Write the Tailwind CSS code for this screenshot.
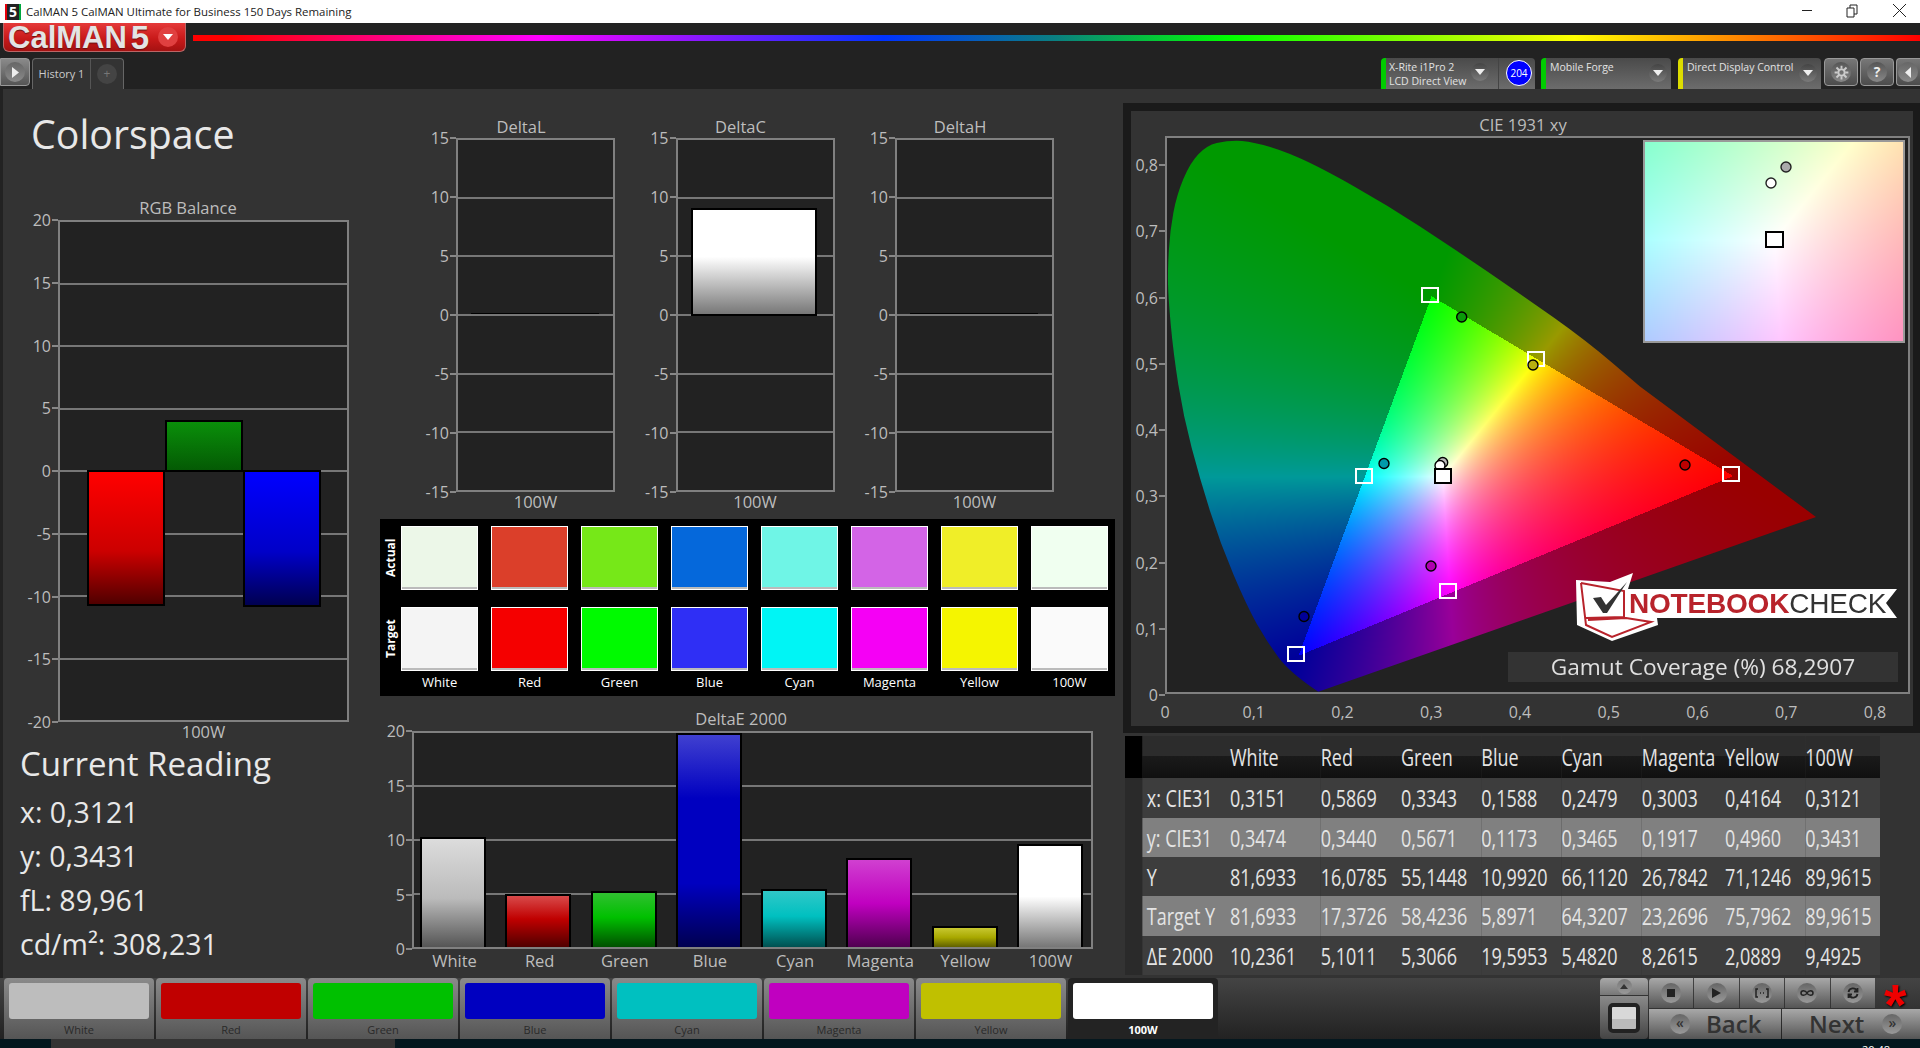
<!DOCTYPE html>
<html>
<head>
<meta charset="utf-8">
<title>CalMAN 5</title>
<script src="https://cdn.jsdelivr.net/npm/@tailwindcss/browser@4"></script>
</head>
<body class="w-[1920px] h-[1048px] overflow-hidden bg-[#333] text-[#bdbdbd] [font-family:'Open_Sans',sans-serif]">

<!-- Title bar -->
<div class="h-[23px] bg-white flex items-center text-[#222]">
  <div class="ml-[5px] w-[16px] h-[16px] bg-[#222] text-white text-[14px] font-bold leading-[16px] text-center border-l-2 border-red-600 border-r-2 border-r-green-600">5</div>
  <span class="ml-[5px] text-[11.45px] leading-none">CalMAN 5 CalMAN Ultimate for Business 150 Days Remaining</span>
  <div class="ml-auto flex items-center">
    <svg class="w-[137px] h-[23px]" viewBox="0 0 137 23" fill="none" stroke="#222"><path d="M19 10.500h10M64 8h7v9h-7zM67 8V5h7v9h-3M110 4l13 13M123 4l-13 13"/></svg>
  </div>
</div>

<!-- Header: logo, rainbow, tabs -->
<div class="h-[66px] bg-[#222] relative">
  <div class="flex items-start">
    <div class="ml-[3px] w-[183px] h-[29px] rounded-b-md border border-t-0 border-[#b66] bg-[linear-gradient(#e53a3a,#c91a1a_55%,#a51212)] flex items-center pl-[4px] [font-family:'Liberation_Sans',sans-serif] font-bold text-[#e4e4e4] [text-shadow:0_1px_1px_#611]">
      <span class="text-[31px] leading-none">CalMAN</span>
      <span class="ml-[4px] text-[33px] leading-none">5</span>
      <span class="ml-auto mr-[7px] w-[20px] h-[20px] rounded-full bg-[#e04040] flex items-center justify-center">
        <svg class="w-[10px] h-[6px]" viewBox="0 0 10 6"><path d="M0 0h10L5 6z" fill="#fff"/></svg>
      </span>
    </div>
    <div class="ml-[7px] mt-[12px] h-[6px] flex-1 bg-[linear-gradient(90deg,#ff0000_2%,#ff00ff_20%,#0033ff_40%,#0a8080_50%,#00ff00_60%,#ffff00_80%,#ff0000_100%)]"></div>
  </div>

  <!-- Left tabs -->
  <div class="absolute left-0 top-[35px] flex items-start">
    <div class="w-[30px] h-[28px] rounded-r-[4px] border border-[#999] bg-[linear-gradient(#8a8a8a,#555)] flex items-center justify-center">
      <span class="w-[20px] h-[20px] rounded-full bg-[linear-gradient(#666,#8a8a8a)] flex items-center justify-center">
        <svg class="w-[7px] h-[11px]" viewBox="0 0 7 11"><path d="M0 0l7 5.500L0 11z" fill="#eee"/></svg>
      </span>
    </div>
    <div class="ml-[2px] h-[31px] rounded-t-[4px] border border-b-0 border-[#666] bg-[#333] flex items-center">
      <span class="w-[58px] text-center text-[11px] text-[#ccc] border-r border-[#555] leading-[30px]">History 1</span>
      <span class="mx-[6px] w-[20px] h-[20px] rounded-full bg-[#444] text-[#777] text-[12px] leading-[20px] text-center">+</span>
    </div>
  </div>

  <!-- Right tabs -->
  <div class="absolute right-0 top-[35px] flex items-start">
    <div class="w-[154px] h-[31px] rounded-t-[4px] bg-[linear-gradient(#4a4a4a,#6c6c6c)] flex border-l-[5px] border-[#0c0] mr-[6px]">
      <div class="pl-[3px] pt-[2px] text-[10.5px] leading-[14px] text-[#e2e2e2] whitespace-nowrap w-[85px]">X-Rite i1Pro 2<br>LCD Direct View</div>
      <span class="mt-[5px] w-[18px] h-[18px] rounded-full bg-[linear-gradient(#444,#7a7a7a)] flex items-center justify-center"><svg class="w-[10px] h-[6px]" viewBox="0 0 10 6"><path d="M0 0h10L5 6z" fill="#eee"/></svg></span>
      <span class="ml-[9px] border-l border-[#444] pl-[7px] pt-[2px]">
        <span class="block w-[26px] h-[26px] rounded-full bg-[#00f] border border-white text-white text-[10px] leading-[24px] text-center">204</span>
      </span>
    </div>
    <div class="w-[130px] h-[31px] rounded-t-[4px] bg-[linear-gradient(#4a4a4a,#6c6c6c)] flex border-l-[5px] border-[#0c0] mr-[7px]">
      <div class="pl-[4px] pt-[2px] text-[10.5px] leading-[14px] text-[#e2e2e2] whitespace-nowrap w-[103px]">Mobile Forge</div>
      <span class="mt-[6px] w-[18px] h-[18px] rounded-full bg-[linear-gradient(#444,#7a7a7a)] flex items-center justify-center"><svg class="w-[10px] h-[6px]" viewBox="0 0 10 6"><path d="M0 0h10L5 6z" fill="#eee"/></svg></span>
    </div>
    <div class="w-[143px] h-[31px] rounded-t-[4px] bg-[linear-gradient(#4a4a4a,#6c6c6c)] flex border-l-[5px] border-[#dd0] mr-[3px]">
      <div class="pl-[4px] pt-[2px] text-[10.5px] leading-[14px] text-[#e2e2e2] whitespace-nowrap w-[116px]">Direct Display Control</div>
      <span class="mt-[6px] w-[18px] h-[18px] rounded-full bg-[linear-gradient(#444,#7a7a7a)] flex items-center justify-center"><svg class="w-[10px] h-[6px]" viewBox="0 0 10 6"><path d="M0 0h10L5 6z" fill="#eee"/></svg></span>
    </div>
    <div class="w-[34px] h-[28px] mr-[2px] rounded-[4px] border border-[#999] bg-[linear-gradient(#777,#4c4c4c)] flex items-center justify-center">
      <span class="w-[20px] h-[20px] rounded-full bg-[linear-gradient(#555,#888)] flex items-center justify-center">
        <svg class="w-[15px] h-[15px]" viewBox="0 0 24 24" fill="none" stroke="#ccc" stroke-width="3"><circle cx="12" cy="12" r="5"/><path d="M12 1v5M12 18v5M1 12h5M18 12h5M4 4l4 4M16 16l4 4M20 4l-4 4M8 16l-4 4"/></svg>
      </span>
    </div>
    <div class="w-[34px] h-[28px] mr-[2px] rounded-[4px] border border-[#999] bg-[linear-gradient(#777,#4c4c4c)] flex items-center justify-center">
      <span class="w-[20px] h-[20px] rounded-full bg-[linear-gradient(#555,#888)] text-[#eee] text-[14px] font-bold leading-[20px] text-center">?</span>
    </div>
    <div class="w-[24px] h-[28px] rounded-l-[4px] border border-r-0 border-[#999] bg-[linear-gradient(#777,#4c4c4c)] flex items-center pl-[1px]">
      <span class="w-[20px] h-[20px] rounded-full bg-[linear-gradient(#666,#8a8a8a)] flex items-center justify-center">
        <svg class="w-[6px] h-[11px]" viewBox="0 0 6 11"><path d="M6 0v11L0 5.500z" fill="#eee"/></svg>
      </span>
    </div>
  </div>
</div>

<!-- Main -->
<div class="h-[889px] flex">

  <!-- Left column -->
  <div class="w-[370px] border-l-[3px] border-[#222]">
    <h1 class="h-[107px] pl-[28px] pt-[17px] text-[39.3px] leading-[56px] text-[#e8e8e8]">Colorspace</h1>
    <div class="ml-[55px] w-[260px] text-center text-[16.5px] leading-[24px] text-[#bdbdbd]">RGB Balance</div>
    <div class="flex">
      <div class="w-[55px] h-[502px] flex flex-col justify-between text-[16px] text-[#bdbdbd]">
        <div class="h-0 flex items-center justify-end gap-px">20<i class="w-[6px] h-[2px] bg-[#888]"></i></div>
        <div class="h-0 flex items-center justify-end gap-px">15<i class="w-[6px] h-[2px] bg-[#888]"></i></div>
        <div class="h-0 flex items-center justify-end gap-px">10<i class="w-[6px] h-[2px] bg-[#888]"></i></div>
        <div class="h-0 flex items-center justify-end gap-px">5<i class="w-[6px] h-[2px] bg-[#888]"></i></div>
        <div class="h-0 flex items-center justify-end gap-px">0<i class="w-[6px] h-[2px] bg-[#888]"></i></div>
        <div class="h-0 flex items-center justify-end gap-px">-5<i class="w-[6px] h-[2px] bg-[#888]"></i></div>
        <div class="h-0 flex items-center justify-end gap-px">-10<i class="w-[6px] h-[2px] bg-[#888]"></i></div>
        <div class="h-0 flex items-center justify-end gap-px">-15<i class="w-[6px] h-[2px] bg-[#888]"></i></div>
        <div class="h-0 flex items-center justify-end gap-px">-20<i class="w-[6px] h-[2px] bg-[#888]"></i></div>
      </div>
      <div class="relative w-[291px] h-[502px] bg-[#222] border-2 border-[#808080] flex flex-col">
        <div class="flex-1"></div><div class="flex-1 border-t-2 border-[#777]"></div><div class="flex-1 border-t-2 border-[#777]"></div><div class="flex-1 border-t-2 border-[#777]"></div><div class="flex-1 border-t-2 border-[#777]"></div><div class="flex-1 border-t-2 border-[#777]"></div><div class="flex-1 border-t-2 border-[#777]"></div><div class="flex-1 border-t-2 border-[#777]"></div>
        <div class="absolute left-[27px] top-[248px] w-[78px] h-[136px] border-2 border-black bg-[linear-gradient(#ff0000,#cc0000_60%,#500000)]"></div>
        <div class="absolute left-[105px] top-[198px] w-[78px] h-[52px] border-2 border-black bg-[linear-gradient(#0a8f0a,#045a04)]"></div>
        <div class="absolute left-[183px] top-[248px] w-[78px] h-[137px] border-2 border-black bg-[linear-gradient(#0000ff,#0000c8_60%,#000050)]"></div>
      </div>
    </div>
    <div class="ml-[55px] w-[291px] text-center text-[16.5px] leading-[20px]">100W</div>
    <div class="pl-[17px] text-[#e8e8e8]">
      <div class="text-[33px] leading-[44px]">Current Reading</div>
      <div class="text-[28.5px] leading-[44px] mt-[4px]">x: 0,3121</div>
      <div class="text-[28.5px] leading-[44px]">y: 0,3431</div>
      <div class="text-[28.5px] leading-[44px]">fL: 89,961</div>
      <div class="text-[28.5px] leading-[44px]">cd/m²: 308,231</div>
    </div>
  </div>

  <!-- Middle column -->
  <div class="w-[753px]">
    <div class="flex pl-[40px] pt-[27px] gap-[14.5px] h-[430px]">
      <!-- DeltaL -->
      <div class="w-[205px]">
        <div class="ml-[46px] w-[130px] text-center text-[16.5px] leading-[22px]">DeltaL</div>
        <div class="flex">
          <div class="w-[46px] h-[354px] flex flex-col justify-between text-[16px]">
            <div class="h-0 flex items-center justify-end gap-px">15<i class="w-[6px] h-[2px] bg-[#888]"></i></div>
            <div class="h-0 flex items-center justify-end gap-px">10<i class="w-[6px] h-[2px] bg-[#888]"></i></div>
            <div class="h-0 flex items-center justify-end gap-px">5<i class="w-[6px] h-[2px] bg-[#888]"></i></div>
            <div class="h-0 flex items-center justify-end gap-px">0<i class="w-[6px] h-[2px] bg-[#888]"></i></div>
            <div class="h-0 flex items-center justify-end gap-px">-5<i class="w-[6px] h-[2px] bg-[#888]"></i></div>
            <div class="h-0 flex items-center justify-end gap-px">-10<i class="w-[6px] h-[2px] bg-[#888]"></i></div>
            <div class="h-0 flex items-center justify-end gap-px">-15<i class="w-[6px] h-[2px] bg-[#888]"></i></div>
          </div>
          <div class="relative w-[159px] h-[354px] bg-[#222] border-2 border-[#808080] flex flex-col">
            <div class="flex-1"></div><div class="flex-1 border-t-2 border-[#777]"></div><div class="flex-1 border-t-2 border-[#777]"></div><div class="flex-1 border-t-2 border-[#777]"></div><div class="flex-1 border-t-2 border-[#777]"></div><div class="flex-1 border-t-2 border-[#777]"></div>
            <div class="absolute left-[13px] top-[173px] w-[128px] h-px bg-black"></div>
          </div>
        </div>
        <div class="ml-[46px] text-center text-[16.5px] leading-[20px]">100W</div>
      </div>
      <!-- DeltaC -->
      <div class="w-[205px]">
        <div class="ml-[46px] w-[130px] text-center text-[16.5px] leading-[22px]">DeltaC</div>
        <div class="flex">
          <div class="w-[46px] h-[354px] flex flex-col justify-between text-[16px]">
            <div class="h-0 flex items-center justify-end gap-px">15<i class="w-[6px] h-[2px] bg-[#888]"></i></div>
            <div class="h-0 flex items-center justify-end gap-px">10<i class="w-[6px] h-[2px] bg-[#888]"></i></div>
            <div class="h-0 flex items-center justify-end gap-px">5<i class="w-[6px] h-[2px] bg-[#888]"></i></div>
            <div class="h-0 flex items-center justify-end gap-px">0<i class="w-[6px] h-[2px] bg-[#888]"></i></div>
            <div class="h-0 flex items-center justify-end gap-px">-5<i class="w-[6px] h-[2px] bg-[#888]"></i></div>
            <div class="h-0 flex items-center justify-end gap-px">-10<i class="w-[6px] h-[2px] bg-[#888]"></i></div>
            <div class="h-0 flex items-center justify-end gap-px">-15<i class="w-[6px] h-[2px] bg-[#888]"></i></div>
          </div>
          <div class="relative w-[159px] h-[354px] bg-[#222] border-2 border-[#808080] flex flex-col">
            <div class="flex-1"></div><div class="flex-1 border-t-2 border-[#777]"></div><div class="flex-1 border-t-2 border-[#777]"></div><div class="flex-1 border-t-2 border-[#777]"></div><div class="flex-1 border-t-2 border-[#777]"></div><div class="flex-1 border-t-2 border-[#777]"></div>
            <div class="absolute left-[13px] top-[68px] w-[126px] h-[108px] border-2 border-black bg-[linear-gradient(#fff,#fff_45%,#777)]"></div>
          </div>
        </div>
        <div class="ml-[46px] text-center text-[16.5px] leading-[20px]">100W</div>
      </div>
      <!-- DeltaH -->
      <div class="w-[205px]">
        <div class="ml-[46px] w-[130px] text-center text-[16.5px] leading-[22px]">DeltaH</div>
        <div class="flex">
          <div class="w-[46px] h-[354px] flex flex-col justify-between text-[16px]">
            <div class="h-0 flex items-center justify-end gap-px">15<i class="w-[6px] h-[2px] bg-[#888]"></i></div>
            <div class="h-0 flex items-center justify-end gap-px">10<i class="w-[6px] h-[2px] bg-[#888]"></i></div>
            <div class="h-0 flex items-center justify-end gap-px">5<i class="w-[6px] h-[2px] bg-[#888]"></i></div>
            <div class="h-0 flex items-center justify-end gap-px">0<i class="w-[6px] h-[2px] bg-[#888]"></i></div>
            <div class="h-0 flex items-center justify-end gap-px">-5<i class="w-[6px] h-[2px] bg-[#888]"></i></div>
            <div class="h-0 flex items-center justify-end gap-px">-10<i class="w-[6px] h-[2px] bg-[#888]"></i></div>
            <div class="h-0 flex items-center justify-end gap-px">-15<i class="w-[6px] h-[2px] bg-[#888]"></i></div>
          </div>
          <div class="relative w-[159px] h-[354px] bg-[#222] border-2 border-[#808080] flex flex-col">
            <div class="flex-1"></div><div class="flex-1 border-t-2 border-[#777]"></div><div class="flex-1 border-t-2 border-[#777]"></div><div class="flex-1 border-t-2 border-[#777]"></div><div class="flex-1 border-t-2 border-[#777]"></div><div class="flex-1 border-t-2 border-[#777]"></div>
            <div class="absolute left-[13px] top-[173px] w-[128px] h-px bg-black"></div>
          </div>
        </div>
        <div class="ml-[46px] text-center text-[16.5px] leading-[20px]">100W</div>
      </div>
    </div>

    <!-- Actual / target swatches -->
    <div class="ml-[10px] w-[735px] h-[177px] bg-black flex">
      <div class="w-[21px] pt-[7px] flex flex-col items-center gap-[17px] text-white text-[12px] font-bold">
        <div class="h-[64px] [writing-mode:vertical-rl] rotate-180 text-center leading-[20px]">Actual</div>
        <div class="h-[64px] [writing-mode:vertical-rl] rotate-180 text-center leading-[20px]">Target</div>
      </div>
      <div class="w-[714px] grid grid-cols-8 gap-x-[12.8px] pt-[7px] pr-[7px] grid-rows-[64px_64px_24px] gap-y-[17px] content-start">
        <div class="border border-white shadow-[inset_0_-2px_0_#bbb] bg-[#ecf7e8]"></div>
        <div class="border border-white shadow-[inset_0_-2px_0_#bbb] bg-[#db3f2a]"></div>
        <div class="border border-white shadow-[inset_0_-2px_0_#bbb] bg-[#76e818]"></div>
        <div class="border border-white shadow-[inset_0_-2px_0_#bbb] bg-[#0568db]"></div>
        <div class="border border-white shadow-[inset_0_-2px_0_#bbb] bg-[#6ff5e6]"></div>
        <div class="border border-white shadow-[inset_0_-2px_0_#bbb] bg-[#d364e6]"></div>
        <div class="border border-white shadow-[inset_0_-2px_0_#bbb] bg-[#f0ee28]"></div>
        <div class="border border-white shadow-[inset_0_-2px_0_#bbb] bg-[#f0fff0]"></div>
        <div class="border border-white shadow-[inset_0_-2px_0_#bbb] bg-[#f4f4f4]"></div>
        <div class="border border-white shadow-[inset_0_-2px_0_#bbb] bg-[#f50000]"></div>
        <div class="border border-white shadow-[inset_0_-2px_0_#bbb] bg-[#00fa00]"></div>
        <div class="border border-white shadow-[inset_0_-2px_0_#bbb] bg-[#2f2ff5]"></div>
        <div class="border border-white shadow-[inset_0_-2px_0_#bbb] bg-[#00f5f5]"></div>
        <div class="border border-white shadow-[inset_0_-2px_0_#bbb] bg-[#f500f5]"></div>
        <div class="border border-white shadow-[inset_0_-2px_0_#bbb] bg-[#f5f500]"></div>
        <div class="border border-white shadow-[inset_0_-2px_0_#bbb] bg-[#fafafa]"></div>
        <div class="col-span-8 grid grid-cols-8 gap-x-[12.8px] mt-[-18px] text-white text-[13px] leading-[24px] text-center">
          <span>White</span><span>Red</span><span>Green</span><span>Blue</span><span>Cyan</span><span>Magenta</span><span>Yellow</span><span>100W</span>
        </div>
      </div>
    </div>

    <!-- DeltaE 2000 -->
    <div class="ml-[42px] mt-[11px] mb-px w-[658px] text-center text-[16.5px] leading-[23px]">DeltaE 2000</div>
    <div class="flex">
      <div class="w-[42px] h-[218px] flex flex-col justify-between text-[16px]">
        <div class="h-0 flex items-center justify-end gap-px">20<i class="w-[6px] h-[2px] bg-[#888]"></i></div>
        <div class="h-0 flex items-center justify-end gap-px">15<i class="w-[6px] h-[2px] bg-[#888]"></i></div>
        <div class="h-0 flex items-center justify-end gap-px">10<i class="w-[6px] h-[2px] bg-[#888]"></i></div>
        <div class="h-0 flex items-center justify-end gap-px">5<i class="w-[6px] h-[2px] bg-[#888]"></i></div>
        <div class="h-0 flex items-center justify-end gap-px">0<i class="w-[6px] h-[2px] bg-[#888]"></i></div>
      </div>
      <div class="relative w-[681px] h-[218px] bg-[#222] border-2 border-[#808080] flex flex-col">
        <div class="flex-1"></div><div class="flex-1 border-t-2 border-[#777]"></div><div class="flex-1 border-t-2 border-[#777]"></div><div class="flex-1 border-t-2 border-[#777]"></div>
        <div class="absolute inset-0 flex items-end pl-[6px] gap-[19.3px]">
          <div class="w-[66px] h-[110px] border-2 border-b-0 border-black bg-[linear-gradient(#dcdcdc,#bbb_55%,#555)]"></div>
          <div class="w-[66px] h-[53px] border-2 border-b-0 border-black bg-[linear-gradient(#d84a4a,#c00000_45%,#500000)]"></div>
          <div class="w-[66px] h-[56px] border-2 border-b-0 border-black bg-[linear-gradient(#30c030,#00c000_45%,#005000)]"></div>
          <div class="w-[66px] h-[214px] border-2 border-b-0 border-black bg-[linear-gradient(#4040d0,#0000c0_30%,#0000c0_70%,#000050)]"></div>
          <div class="w-[66px] h-[58px] border-2 border-b-0 border-black bg-[linear-gradient(#30c8c8,#00c0c0_45%,#005050)]"></div>
          <div class="w-[66px] h-[89px] border-2 border-b-0 border-black bg-[linear-gradient(#d040d0,#c000c0_50%,#500050)]"></div>
          <div class="w-[66px] h-[21px] border-2 border-b-0 border-black bg-[linear-gradient(#c8c830,#a8a800_50%,#606000)]"></div>
          <div class="w-[66px] h-[103px] border-2 border-b-0 border-black bg-[linear-gradient(#fff,#fff_50%,#777)]"></div>
        </div>
      </div>
    </div>
    <div class="ml-[42px] w-[681px] grid grid-cols-8 text-center text-[16.5px] leading-[24px]">
      <span>White</span><span>Red</span><span>Green</span><span>Blue</span><span>Cyan</span><span>Magenta</span><span>Yellow</span><span>100W</span>
    </div>
  </div>

  <!-- Right column -->
  <div class="w-[797px] pt-[14px]">
    <div class="h-[630px] bg-[#1a1a1a] pl-[8px] pr-[7px] pt-[8px] pb-[7px]">
      <div class="h-[615px] bg-[#333] relative">
        <div class="h-[25px] ml-[34px] w-[716px] text-center text-[16.5px] leading-[28px]">CIE 1931 xy</div>

        <div class="flex">
          <div class="w-[34px] pt-[29px] h-[558px]">
            <div class="h-[530px] flex flex-col justify-between text-[16px]">
              <div class="h-0 flex items-center justify-end gap-px">0,8<i class="w-[6px] h-[2px] bg-[#888]"></i></div>
              <div class="h-0 flex items-center justify-end gap-px">0,7<i class="w-[6px] h-[2px] bg-[#888]"></i></div>
              <div class="h-0 flex items-center justify-end gap-px">0,6<i class="w-[6px] h-[2px] bg-[#888]"></i></div>
              <div class="h-0 flex items-center justify-end gap-px">0,5<i class="w-[6px] h-[2px] bg-[#888]"></i></div>
              <div class="h-0 flex items-center justify-end gap-px">0,4<i class="w-[6px] h-[2px] bg-[#888]"></i></div>
              <div class="h-0 flex items-center justify-end gap-px">0,3<i class="w-[6px] h-[2px] bg-[#888]"></i></div>
              <div class="h-0 flex items-center justify-end gap-px">0,2<i class="w-[6px] h-[2px] bg-[#888]"></i></div>
              <div class="h-0 flex items-center justify-end gap-px">0,1<i class="w-[6px] h-[2px] bg-[#888]"></i></div>
              <div class="h-0 flex items-center justify-end gap-px">0<i class="w-[6px] h-[2px] bg-[#888]"></i></div>
            </div>
          </div>

          <!-- Chromaticity plot -->
          <div class="relative w-[745px] h-[558px] bg-[#222] border-2 border-[#808080]">
            <canvas id="cie" width="745" height="558" class="absolute left-[-2px] top-[-2px]"></canvas>

            <!-- Markers, coordinates are relative to the plot -->
            <svg class="absolute left-[-2px] top-[-2px]" width="745" height="558" fill="none" stroke-width="2">
              <g stroke="#fff">
                <rect x="257" y="152" width="16" height="14"/>
                <rect x="363" y="216" width="16" height="14"/>
                <rect x="191" y="333" width="16" height="14"/>
                <rect x="275" y="448" width="16" height="14"/>
                <rect x="123" y="511" width="16" height="14"/>
                <rect x="558" y="331" width="16" height="14"/>
              </g>
              <g stroke="#000" stroke-width="1.4">
                <ellipse cx="296.7" cy="181" rx="5" ry="5" fill="#0a9a0a"/>
                <ellipse cx="368" cy="229" rx="5" ry="5" fill="#b8b010"/>
                <ellipse cx="219" cy="327.5" rx="5" ry="5" fill="#009aaa"/>
                <ellipse cx="139" cy="480.5" rx="5" ry="5" fill="#000099"/>
                <ellipse cx="266" cy="430" rx="5" ry="5" fill="#b000b0"/>
                <ellipse cx="520" cy="329" rx="5" ry="5" fill="#bb0000"/>
                <ellipse cx="277.7" cy="326.5" rx="5" ry="5" fill="#bbb"/>
                <ellipse cx="275" cy="329.5" rx="5" ry="5" fill="#fff"/>
              </g>
              <rect x="270" y="333" width="16" height="14" fill="#fff" stroke="#000"/>
            </svg>

            <!-- Zoomed white point inset -->
            <div class="absolute right-0 top-0 w-[268px] h-[207px] bg-[#222] pl-[3px] pt-[2px]">
              <div class="relative w-[262px] h-[203px] border-2 border-[#999]">
                <canvas id="cie-zoom" width="258" height="199" class="block"></canvas>
                <svg class="absolute left-0 top-0" width="258" height="199" fill="none">
                  <circle cx="141" cy="25" r="5" fill="#aaa" stroke="#222" stroke-width="1.4"/>
                  <circle cx="126" cy="41" r="5" fill="#fff" stroke="#222" stroke-width="1.4"/>
                  <rect x="121" y="90" width="17" height="15" fill="#fff" stroke="#000" stroke-width="2"/>
                </svg>
              </div>
            </div>

            <!-- Gamut coverage -->
            <div class="absolute left-[341px] top-[514px] w-[390px] h-[30px] bg-[#333] text-center text-[#e0e0e0] text-[22.7px] leading-[30px]">Gamut Coverage (%) 68,2907</div>

            <!-- Notebookcheck logo -->
            <div class="absolute left-[403px] top-[427px] w-[327px] h-[80px]">
              <svg class="absolute inset-0" width="327" height="80" viewBox="0 0 327 80">
                <path d="M6 15L40 17 63 8 58 24H327L316 38 327 53H87L88 60 42 76 7 60z" fill="#fff"/>
                <path d="M11 18L54 26 54 52 16 53M11 18L16 60 42 72 81 57 56 53 18 55" fill="none" stroke="#b8232b" stroke-width="2"/>
                <path d="M23 33L31 32 36 40 57 17 37 48 33 48z" fill="#333"/>
              </svg>
              <div class="absolute left-[59px] top-[22px] flex text-[28px] leading-[33px] tracking-[-0.2px] [font-family:'Liberation_Sans',sans-serif] whitespace-nowrap">
                <span class="font-bold text-[#b8232b]">NOTEBOOK</span><span class="text-[#333]">CHECK</span>
              </div>
            </div>
          </div>
        </div>

        <div class="ml-[34px] w-[710px] flex justify-between text-[16px] pt-[6px] leading-[24px]">
          <span class="w-0 flex justify-center">0</span><span class="w-0 flex justify-center">0,1</span><span class="w-0 flex justify-center">0,2</span><span class="w-0 flex justify-center">0,3</span><span class="w-0 flex justify-center">0,4</span><span class="w-0 flex justify-center">0,5</span><span class="w-0 flex justify-center">0,6</span><span class="w-0 flex justify-center">0,7</span><span class="w-0 flex justify-center">0,8</span>
        </div>
      </div>
    </div>

    <!-- Results table, set in a condensed look like the original -->
    <div class="ml-[2px] mt-[3px] w-[755px] h-[239px] overflow-hidden">
      <table class="w-[1007px] table-fixed origin-top-left scale-x-[.75] text-[24px] text-[#e4e4e4] border-collapse">
        <colgroup>
          <col class="w-[23px]"><col class="w-[117px]"><col class="w-[121px]"><col class="w-[107px]"><col class="w-[107px]"><col class="w-[107px]"><col class="w-[107px]"><col class="w-[111px]"><col class="w-[107px]"><col class="w-[100px]">
        </colgroup>
        <tr class="h-[42px] bg-[linear-gradient(#2c2c2c,#2c2c2c_48%,#1a1a1a_48%,#101010)]">
          <td class="bg-black"></td><td></td><td>White</td><td>Red</td><td>Green</td><td>Blue</td><td>Cyan</td><td>Magenta</td><td>Yellow</td><td>100W</td>
        </tr>
        <tr class="h-[40px] bg-[#3d3d3d]">
          <td class="bg-[#2a2a2a]"></td><td class="pl-[6px] whitespace-nowrap">x: CIE31</td><td>0,3151</td><td>0,5869</td><td>0,3343</td><td>0,1588</td><td>0,2479</td><td>0,3003</td><td>0,4164</td><td>0,3121</td>
        </tr>
        <tr class="h-[39px] bg-[#808080]">
          <td class="bg-[#2a2a2a]"></td><td class="pl-[6px] whitespace-nowrap">y: CIE31</td><td>0,3474</td><td>0,3440</td><td>0,5671</td><td>0,1173</td><td>0,3465</td><td>0,1917</td><td>0,4960</td><td>0,3431</td>
        </tr>
        <tr class="h-[39px] bg-[#3d3d3d]">
          <td class="bg-[#2a2a2a]"></td><td class="pl-[6px] whitespace-nowrap">Y</td><td>81,6933</td><td>16,0785</td><td>55,1448</td><td>10,9920</td><td>66,1120</td><td>26,7842</td><td>71,1246</td><td>89,9615</td>
        </tr>
        <tr class="h-[40px] bg-[#808080]">
          <td class="bg-[#2a2a2a]"></td><td class="pl-[6px] whitespace-nowrap">Target Y</td><td>81,6933</td><td>17,3726</td><td>58,4236</td><td>5,8971</td><td>64,3207</td><td>23,2696</td><td>75,7962</td><td>89,9615</td>
        </tr>
        <tr class="h-[39px] bg-[#3d3d3d]">
          <td class="bg-[#2a2a2a]"></td><td class="pl-[6px] whitespace-nowrap">ΔE 2000</td><td>10,2361</td><td>5,1011</td><td>5,3066</td><td>19,5953</td><td>5,4820</td><td>8,2615</td><td>2,0889</td><td>9,4925</td>
        </tr>
      </table>
    </div>
  </div>
</div>

<!-- Bottom bar -->
<div class="h-[61px] flex bg-[linear-gradient(#444,#222)]">
  <div class="pl-[4px] flex gap-[2px] text-[11px] text-[#2a2a2a] text-center">
    <div class="w-[150px] rounded-t-[4px] bg-[linear-gradient(#8a8a8a,#555)] p-[5px] pb-0"><div class="h-[36px] rounded-[3px] bg-[#bdbdbd]"></div><div class="leading-[22px]">White</div></div>
    <div class="w-[150px] rounded-t-[4px] bg-[linear-gradient(#8a8a8a,#555)] p-[5px] pb-0"><div class="h-[36px] rounded-[3px] bg-[#c00000]"></div><div class="leading-[22px]">Red</div></div>
    <div class="w-[150px] rounded-t-[4px] bg-[linear-gradient(#8a8a8a,#555)] p-[5px] pb-0"><div class="h-[36px] rounded-[3px] bg-[#00c000]"></div><div class="leading-[22px]">Green</div></div>
    <div class="w-[150px] rounded-t-[4px] bg-[linear-gradient(#8a8a8a,#555)] p-[5px] pb-0"><div class="h-[36px] rounded-[3px] bg-[#0000c0]"></div><div class="leading-[22px]">Blue</div></div>
    <div class="w-[150px] rounded-t-[4px] bg-[linear-gradient(#8a8a8a,#555)] p-[5px] pb-0"><div class="h-[36px] rounded-[3px] bg-[#00c0c0]"></div><div class="leading-[22px]">Cyan</div></div>
    <div class="w-[150px] rounded-t-[4px] bg-[linear-gradient(#8a8a8a,#555)] p-[5px] pb-0"><div class="h-[36px] rounded-[3px] bg-[#c000c0]"></div><div class="leading-[22px]">Magenta</div></div>
    <div class="w-[150px] rounded-t-[4px] bg-[linear-gradient(#8a8a8a,#555)] p-[5px] pb-0"><div class="h-[36px] rounded-[3px] bg-[#c0c000]"></div><div class="leading-[22px]">Yellow</div></div>
    <div class="w-[150px] rounded-t-[4px] bg-[#232323] p-[5px] pb-0"><div class="h-[36px] rounded-[3px] bg-white"></div><div class="leading-[22px] font-bold text-white">100W</div></div>
  </div>

  <!-- Measure controls -->
  <div class="ml-[382px] w-[48px] mr-px rounded-[4px] overflow-hidden flex flex-col">
    <div class="h-[18px] bg-[linear-gradient(#a8a8a8,#777)] flex justify-center items-center border-b border-[#333]">
      <span class="w-[15px] h-[15px] rounded-full bg-[linear-gradient(#777,#999)] flex items-center justify-center"><svg class="w-[8px] h-[5px]" viewBox="0 0 8 5"><path d="M4 0l4 5H0z" fill="#333"/></svg></span>
    </div>
    <div class="flex-1 bg-[linear-gradient(#8a8a8a,#444)] flex items-center justify-center">
      <span class="w-[32px] h-[30px] rounded-[5px] border-[4px] border-[#222] bg-[linear-gradient(#d8d8d8,#d8d8d8_55%,#bbb_55%,#bbb)]"></span>
    </div>
  </div>
  <div class="flex-1 flex flex-col relative">
    <div class="h-[30px] w-[226px] flex gap-px rounded-tl-[4px] overflow-hidden">
      <div class="flex-1 bg-[linear-gradient(#a8a8a8,#555)] flex items-center justify-center"><span class="w-[20px] h-[20px] rounded-full bg-[linear-gradient(#666,#999)] flex items-center justify-center"><svg class="w-[8px] h-[8px]" viewBox="0 0 8 8"><path d="M0 0h8v8H0z" fill="#222"/></svg></span></div>
      <div class="flex-1 bg-[linear-gradient(#a8a8a8,#555)] flex items-center justify-center"><span class="w-[20px] h-[20px] rounded-full bg-[linear-gradient(#666,#999)] flex items-center justify-center"><svg class="w-[9px] h-[10px]" viewBox="0 0 9 10"><path d="M0 0l9 5-9 5z" fill="#222"/></svg></span></div>
      <div class="flex-1 bg-[linear-gradient(#a8a8a8,#555)] flex items-center justify-center"><span class="w-[20px] h-[20px] rounded-full bg-[linear-gradient(#666,#999)] flex items-center justify-center"><svg class="w-[14px] h-[10px]" viewBox="0 0 14 10" fill="none" stroke="#222" stroke-width="1.5"><path d="M3 1H1v8h2M11 1h2v8h-2M5 5h1M8 5h1"/></svg></span></div>
      <div class="flex-1 bg-[linear-gradient(#a8a8a8,#555)] flex items-center justify-center"><span class="w-[20px] h-[20px] rounded-full bg-[linear-gradient(#666,#999)] flex items-center justify-center"><svg class="w-[14px] h-[8px]" viewBox="0 0 14 8" fill="none" stroke="#222" stroke-width="1.5"><path d="M7 4C5.500 1 1 1 1 4s4.500 3 6 0 6-3 6 0-4.500 3-6 0z"/></svg></span></div>
      <div class="flex-1 bg-[linear-gradient(#a8a8a8,#555)] flex items-center justify-center"><span class="w-[20px] h-[20px] rounded-full bg-[linear-gradient(#666,#999)] flex items-center justify-center"><svg class="w-[12px] h-[12px]" viewBox="0 0 12 12" fill="none" stroke="#222" stroke-width="1.8"><path d="M1.500 5A4.500 4.500 0 0 1 10 4M10.500 7A4.500 4.500 0 0 1 2 8M10.500 1v3.500H7M1.500 11V7.500H5"/></svg></span></div>
    </div>
    <div class="mt-px h-[30px] flex gap-px text-[24px] font-semibold text-[#333] leading-[30px]">
      <div class="flex-1 bg-[linear-gradient(#a8a8a8,#555)] flex items-center pl-[21px] gap-[16px]"><span class="w-[20px] h-[20px] rounded-full bg-[linear-gradient(#666,#999)] text-[14px] leading-[18px] text-center">«</span>Back</div>
      <div class="flex-1 bg-[linear-gradient(#a8a8a8,#555)] flex items-center pl-[27px] gap-[18px]">Next<span class="w-[20px] h-[20px] rounded-full bg-[linear-gradient(#666,#999)] text-[14px] leading-[18px] text-center">»</span></div>
    </div>
    <span class="absolute left-[235px] top-[-2px] text-[#e00] text-[58px] font-bold leading-[58px] [font-family:'Liberation_Sans',sans-serif] [text-shadow:1px_1px_2px_#000]">*</span>
  </div>
</div>

<!-- Task bar, mostly out of frame -->
<div class="h-[9px] bg-[#04171e] flex overflow-hidden">
  <div class="ml-[51px] w-[344px] bg-[#333]"></div>
  <span class="ml-auto mr-[30px] mt-[5px] text-white text-[11px] leading-none">20:48</span>
</div>

<script>
    // Outline of the horseshoe, read off the picture (canvas px)
    var OUTLINE = [[153.3,555.7],[125,537],[101.7,505.5],[81.7,470],[55,406.7],[35,343.4],[18.3,280],[8.3,217],[3.3,161.6],[2.7,134],
        [5,94.4],[11.7,58.9],[25,27.2],[41.7,9.5],[61.7,4.7],[81.7,4.7],[115,13.4],[155,31.2],[221.7,68.7],[288.3,112.2],
        [355,157.7],[421.7,205],[475,250.6]];
    var TIP = [651,381];

    // xy to 8 bit rgb. Outside the sRGB triangle the colour is clamped and dimmed.
    function xyToRgb(x, y) {
        var X = x / y, Z = (1 - x - y) / y;
        var r = 3.2406 * X - 1.5372 - 0.4986 * Z;
        var g = -0.9689 * X + 1.8758 + 0.0415 * Z;
        var b = 0.0557 * X - 0.204 + 1.057 * Z;
        var outside = r < 0 || g < 0 || b < 0;
        r = Math.max(r, 0); g = Math.max(g, 0); b = Math.max(b, 0);
        var m = Math.max(r, g, b) || 1;
        var k = outside ? 153 : 255;
        return [k * r / m, k * g / m, k * b / m];
    }

    function paint(ctx, w, h, toX, toY) {
        var img = ctx.createImageData(w, h);
        for (var py = 0; py < h; py++) {
            for (var px = 0; px < w; px++) {
                var c = xyToRgb(toX(px), toY(py)), i = (py * w + px) * 4;
                img.data[i] = c[0]; img.data[i + 1] = c[1]; img.data[i + 2] = c[2]; img.data[i + 3] = 255;
            }
        }
        return img;
    }

    // Main diagram
    var cie = document.getElementById('cie'), ctx = cie.getContext('2d');
    var sx = 887, sy = 666, oy = 559.3;
    var off = document.createElement('canvas');
    off.width = cie.width; off.height = cie.height;
    off.getContext('2d').putImageData(paint(ctx, cie.width, cie.height,
        function (px) { return px / sx; },
        function (py) { return Math.max((oy - py) / sy, 0.001); }), 0, 0);

    // Smooth the outline with midpoints, then straight to the red tip and back
    ctx.beginPath();
    ctx.moveTo(OUTLINE[0][0], OUTLINE[0][1]);
    for (var n = 1; n < OUTLINE.length - 1; n++) {
        var p = OUTLINE[n], q = OUTLINE[n + 1];
        ctx.quadraticCurveTo(p[0], p[1], (p[0] + q[0]) / 2, (p[1] + q[1]) / 2);
    }
    ctx.lineTo(OUTLINE[OUTLINE.length - 1][0], OUTLINE[OUTLINE.length - 1][1]);
    ctx.lineTo(TIP[0], TIP[1]);
    ctx.closePath();
    ctx.clip();
    ctx.drawImage(off, 0, 0);

    // Inset around the white point
    var zoom = document.getElementById('cie-zoom'), zctx = zoom.getContext('2d');
    zctx.putImageData(paint(zctx, zoom.width, zoom.height,
        function (px) { return 0.3127 + (px - 129) / 5300; },
        function (py) { return 0.329 - (py - 97) / 3970; }), 0, 0);
</script>
</body>
</html>
